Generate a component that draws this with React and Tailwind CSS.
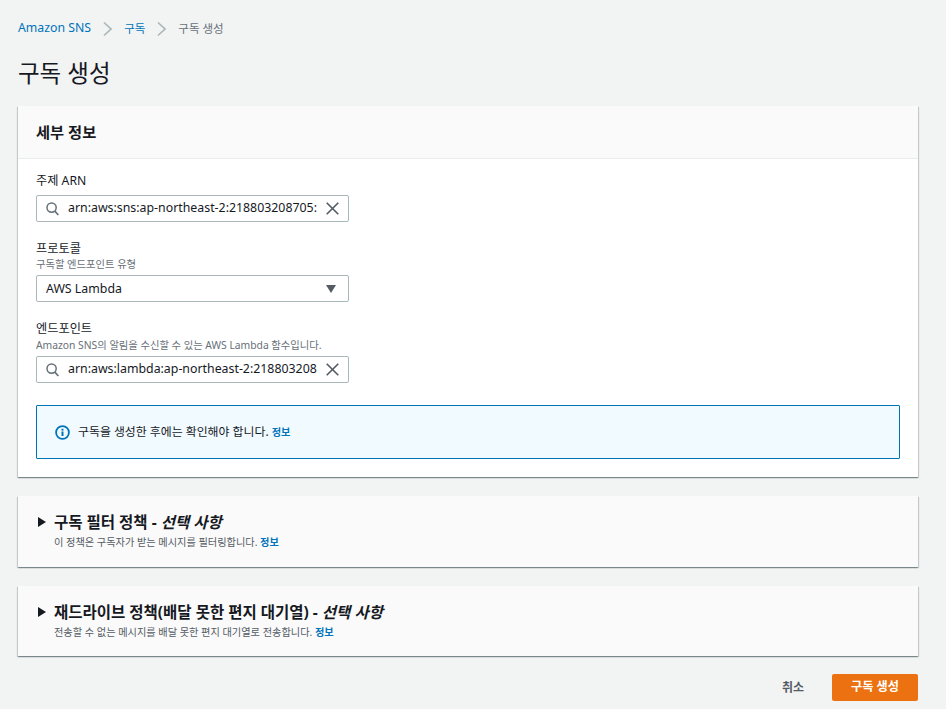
import React from "react";

function Chevron() {
  return (
    <svg width="9" height="16" viewBox="0 0 9 16" fill="none" className="mx-[12px] shrink-0">
      <path d="M1 1.5 L8 8 L1 14.5" stroke="#aab7b8" strokeWidth="1.6" />
    </svg>
  );
}

function SearchInput({ value }) {
  return (
    <div className="w-[313px] h-[27px] bg-white border border-[#aab7b8] rounded-[2px] flex items-center pl-[9px]">
      <svg width="13" height="14" viewBox="0 0 13 14" fill="none" className="shrink-0">
        <circle cx="5.6" cy="5.6" r="4.6" stroke="#687078" strokeWidth="1.5" />
        <path d="M8.8 9.2 L12.4 13" stroke="#687078" strokeWidth="1.7" />
      </svg>
      <span className="ml-[9px] w-[252px] whitespace-nowrap text-[12.35px] leading-none text-[#16191f]">{value}</span>
      <svg width="13" height="13" viewBox="0 0 13 13" fill="none" className="ml-[6px] shrink-0">
        <path d="M0.7 0.7 L12.3 12.3 M12.3 0.7 L0.7 12.3" stroke="#545b64" strokeWidth="1.6" />
      </svg>
    </div>
  );
}

function Caret() {
  return (
    <svg width="10" height="8" viewBox="0 0 10 8" className="shrink-0">
      <path d="M0 0 H10 L5 8 Z" fill="#545b64" />
    </svg>
  );
}

function Collapsed({ title, desc, className }) {
  return (
    <section className={"bg-[#fafafa] shadow-[0_1px_1px_0_rgba(0,28,36,0.3),1px_1px_1px_0_rgba(0,28,36,0.15),-1px_1px_1px_0_rgba(0,28,36,0.15)] pl-[20px] " + className}>
      <div className="flex">
        <svg width="9" height="10" viewBox="0 0 9 10" className="mt-[5px] shrink-0">
          <path d="M0 0 L8 5 L0 10 Z" fill="#16191f" />
        </svg>
        <div className="ml-[7px]">
          <h2 className="text-[15.5px] leading-[20px] font-bold text-[#16191f] whitespace-nowrap">
            {title} - <em className="italic">선택 사항</em>
          </h2>
          <p className="mt-[3px] text-[10.2px] leading-[14px] text-[#545b64] whitespace-nowrap">
            {desc} <a className="text-[#0073bb] font-bold">정보</a>
          </p>
        </div>
      </div>
    </section>
  );
}

export default function App() {
  return (
    <div className="w-[946px] h-[709px] overflow-hidden bg-[#f2f3f3] pl-[18px] pr-[28px] font-['Noto_Sans','Noto_Sans_CJK_KR',sans-serif]">
      <nav className="h-[56px] pt-[1px] flex items-center text-[11.5px] leading-none whitespace-nowrap">
        <a className="text-[#0073bb] text-[12.3px]">Amazon SNS</a>
        <Chevron />
        <a className="text-[#0073bb]">구독</a>
        <Chevron />
        <span className="text-[#687078]">구독 생성</span>
      </nav>
      <h1 className="h-[50px] pt-[1px] text-[23.5px] leading-[32px] font-normal text-[#16191f]">구독 생성</h1>

      <section className="bg-white h-[371px] shadow-[0_1px_1px_0_rgba(0,28,36,0.3),1px_1px_1px_0_rgba(0,28,36,0.15),-1px_1px_1px_0_rgba(0,28,36,0.15)]">
        <header className="h-[53px] bg-[#fafafa] border-b border-[#eaeded] px-[18px] flex items-center">
          <h2 className="-mt-[1px] text-[15.3px] leading-[20px] font-bold text-[#16191f]">세부 정보</h2>
        </header>
        <div className="px-[18px] pt-[13px]">
          <label className="block text-[12.2px] leading-[18px] text-[#16191f] mb-[5px]">주제 ARN</label>
          <SearchInput value="arn:aws:sns:ap-northeast-2:218803208705:" />

          <label className="block mt-[18px] text-[12.2px] leading-[18px] text-[#16191f]">프로토콜</label>
          <p className="-mt-[1px] text-[10.3px] leading-[14px] text-[#687078] mb-[4px]">구독할 엔드포인트 유형</p>
          <div className="w-[313px] h-[27px] bg-white border border-[#aab7b8] rounded-[2px] flex items-center justify-between pl-[9px] pr-[12px] text-[12.35px] text-[#16191f]">
            <span className="pt-[1px]">AWS Lambda</span>
            <Caret />
          </div>

          <label className="block mt-[18px] text-[12.2px] leading-[18px] text-[#16191f]">엔드포인트</label>
          <p className="text-[10.3px] leading-[14px] text-[#687078] mb-[4px]">Amazon SNS의 알림을 수신할 수 있는 AWS Lambda 함수입니다.</p>
          <SearchInput value="arn:aws:lambda:ap-northeast-2:218803208" />

          <div className="mt-[22px] h-[54px] bg-[#f1faff] border border-[#0073bb] rounded-[1px] flex items-center pl-[18px]">
            <svg width="15" height="15" viewBox="0 0 15 15" fill="none" className="shrink-0">
              <circle cx="7.5" cy="7.5" r="6.4" stroke="#0073bb" strokeWidth="1.8" />
              <rect x="6.5" y="6.5" width="2" height="4.5" fill="#0073bb" />
              <rect x="6.5" y="3.8" width="2" height="1.8" fill="#0073bb" />
            </svg>
            <p className="ml-[8px] text-[11.9px] leading-none text-[#16191f]">
              구독을 생성한 후에는 확인해야 합니다. <a className="text-[#0073bb] font-bold text-[10.2px]">정보</a>
            </p>
          </div>
        </div>
      </section>

      <Collapsed
        className="mt-[19px] h-[71px] pt-[16px]"
        title="구독 필터 정책"
        desc="이 정책은 구독자가 받는 메시지를 필터링합니다."
      />
      <Collapsed
        className="mt-[19px] h-[70px] pt-[16px]"
        title="재드라이브 정책(배달 못한 편지 대기열)"
        desc="전송할 수 없는 메시지를 배달 못한 편지 대기열로 전송합니다."
      />

      <footer className="mt-[18px] flex items-center justify-end">
        <button className="text-[12px] font-bold text-[#545b64] mr-[28px]">취소</button>
        <button className="w-[86px] h-[27px] bg-[#ec7211] rounded-[2px] text-white text-[12.2px] font-bold">구독 생성</button>
      </footer>
    </div>
  );
}
